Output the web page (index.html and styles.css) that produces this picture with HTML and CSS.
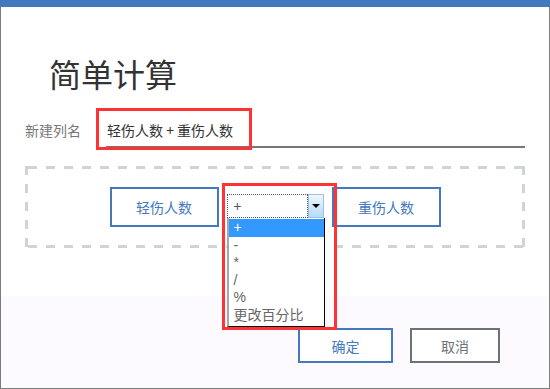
FILE: index.html
```html
<!DOCTYPE html>
<html lang="zh-CN">
  <head>
    <meta charset="UTF-8" />
    <meta name="viewport" content="width=device-width, initial-scale=1" />
    <title>简单计算</title>
    <link rel="stylesheet" href="styles.css">
  </head>
  <body>
    <div class="window">
      <div class="titlebar"></div>
      <div class="frame">
        <div class="content">
          <h1 class="title">简单计算</h1>

          <div class="field">
            <label class="field-label">新建列名</label>
            <div class="field-input">
              轻伤人数 + 重伤人数
              <span class="mark mark-input"></span>
            </div>
          </div>

          <div class="expr">
            <button class="chip">轻伤人数</button>

            <div class="combo">
              <div class="combo-value">+</div>
              <div class="combo-arrow"><span class="caret"></span></div>
              <ul class="combo-list">
                <li class="selected">+</li>
                <li>-</li>
                <li>*</li>
                <li>/</li>
                <li>%</li>
                <li>更改百分比</li>
              </ul>
              <span class="mark mark-combo"></span>
            </div>

            <button class="chip">重伤人数</button>
          </div>
        </div>

        <div class="footer">
          <button class="btn btn-ok">确定</button>
          <button class="btn btn-cancel">取消</button>
        </div>
      </div>
    </div>
  </body>
</html>
```

FILE: styles.css
```css
body {
  margin: 0;
  padding: 0;
  font-family: "Noto Sans CJK SC", "Noto Sans", sans-serif;
  background: #fff;
}
.window {
  width: 550px;
  height: 389px;
  display: flex;
  flex-direction: column;
}
.titlebar {
  height: 7px;
  background: #4379bd;
}
.frame {
  flex: 1;
  display: flex;
  flex-direction: column;
  border-left: 1px solid #7c7c7c;
  border-right: 1px solid #7c7c7c;
  border-bottom: 1px solid #7c7c7c;
}
.content {
  flex: 1;
  padding: 0 24px;
}
.title {
  margin: 46px 0 0 24px;
  font-size: 32px;
  line-height: 40px;
  font-weight: normal;
  color: #333;
}

/* column name row */
.field {
  display: flex;
  margin-top: 27px;
}
.field-label {
  width: 81px;
  font-size: 14px;
  line-height: 20px;
  color: #777;
}
.field-input {
  position: relative;
  flex: 1;
  padding: 0 0 6px 1px;
  font-size: 14px;
  line-height: 20px;
  color: #333;
  border-bottom: 2px solid #777;
}
.mark {
  position: absolute;
  box-sizing: border-box;
  border: 3px solid #ff3333;
  pointer-events: none;
}
.mark-input {
  left: -10px;
  top: -12px;
  width: 156px;
  height: 42px;
}

/* expression area, dashes drawn 9px on / 9px off */
.expr {
  margin-top: 18px;
  height: 82px;
  box-sizing: border-box;
  padding: 3px;
  background:
    repeating-linear-gradient(to right, #d0d4d6 0 9px, transparent 9px 18px) 3px 0 / 100% 3px no-repeat,
    repeating-linear-gradient(to right, #d0d4d6 0 9px, transparent 9px 18px) 3px 100% / 100% 3px no-repeat,
    repeating-linear-gradient(to bottom, #d0d4d6 0 9px, transparent 9px 18px) 0 0 / 3px 100% no-repeat,
    repeating-linear-gradient(to bottom, #d0d4d6 0 9px, transparent 9px 18px) 100% 0 / 3px 100% no-repeat;
  display: flex;
  justify-content: center;
  align-items: center;
  gap: 8px;
}
.chip {
  width: 109px;
  height: 40px;
  background: #fff;
  border: 2px solid #4479bd;
  color: #4479bd;
  font-family: inherit;
  font-size: 14px;
  padding: 0;
}
.combo {
  position: relative;
  width: 97px;
  height: 24px;
  display: flex;
  margin-top: -2px;
}
.combo-value {
  flex: 1;
  box-sizing: border-box;
  border: 1px dotted #556;
  padding-left: 6px;
  font-size: 14px;
  line-height: 22px;
  color: #555;
}
.combo-arrow {
  width: 16px;
  box-sizing: border-box;
  border: 1px solid #9cc0e2;
  background: linear-gradient(#eef7fe, #b4dbf6);
  display: flex;
  justify-content: center;
  align-items: center;
}
.caret {
  width: 0;
  height: 0;
  border-left: 4px solid transparent;
  border-right: 4px solid transparent;
  border-top: 4px solid #000;
}
.combo-list {
  position: absolute;
  left: 0;
  top: 24px;
  width: 98px;
  height: 109px;
  box-sizing: border-box;
  margin: 0;
  padding: 1px 0 0;
  list-style: none;
  background: #fff;
  border-left: 2px solid #a8a8a8;
  border-right: 1px solid #000;
  border-bottom: 1px solid #000;
  font-family: "Liberation Sans", "Noto Sans CJK SC", sans-serif;
  font-size: 14px;
  color: #666;
}
.combo-list li {
  height: 17.5px;
  line-height: 17.5px;
  padding-left: 5px;
}
.combo-list li.selected {
  background: #3399ff;
  color: #fff;
}
.mark-combo {
  left: -5px;
  top: -11px;
  width: 115px;
  height: 147px;
}

/* footer */
.footer {
  height: 92px;
  box-sizing: border-box;
  background: #fdfaff;
  display: flex;
  justify-content: flex-end;
  align-items: flex-start;
  gap: 17px;
  padding: 32px 49px 0 0;
}
.btn {
  height: 35px;
  background: #fff;
  font-family: inherit;
  font-size: 14px;
  padding: 0;
}
.btn-ok {
  width: 95px;
  border: 2px solid #4479bd;
  color: #4479bd;
}
.btn-cancel {
  width: 90px;
  border: 2px solid #6d7373;
  color: #6d7373;
}
```
